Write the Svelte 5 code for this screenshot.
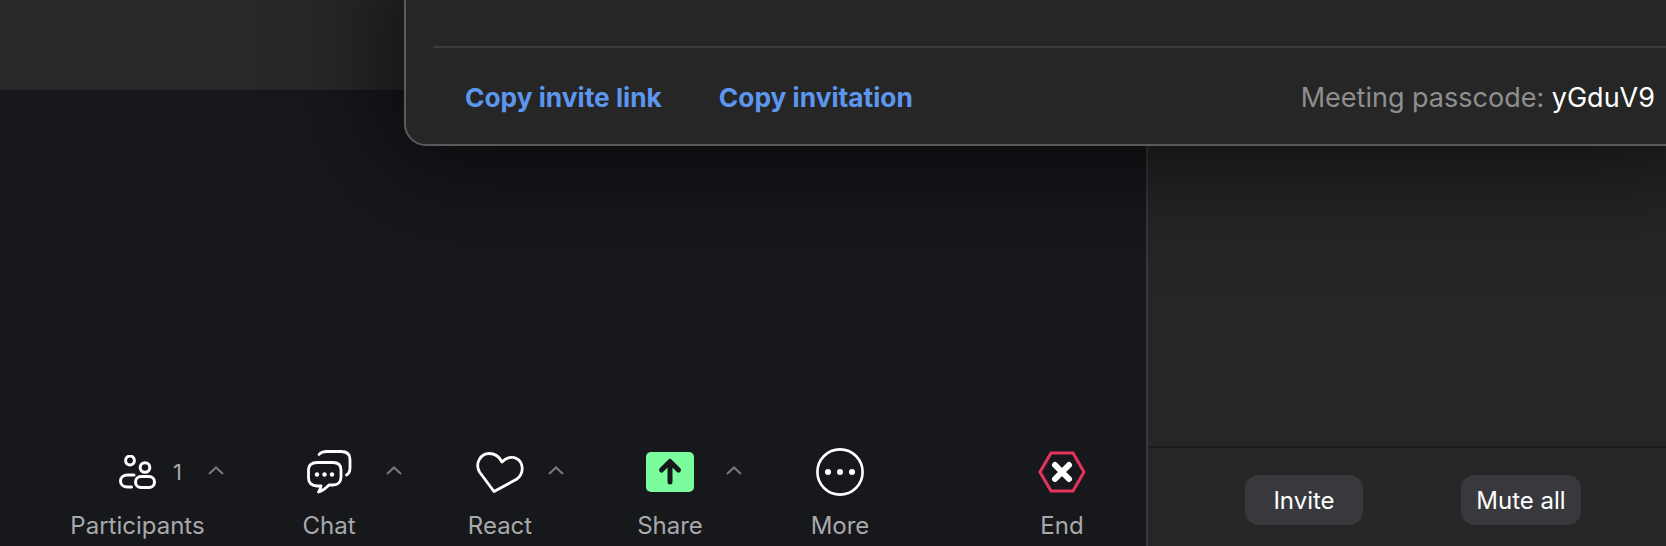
<script lang="ts">
  const tools = [
    { id: 'participants', label: 'Participants', count: '1', caret: true },
    { id: 'chat', label: 'Chat', caret: true },
    { id: 'react', label: 'React', caret: true },
    { id: 'share', label: 'Share', caret: true },
    { id: 'more', label: 'More', caret: false },
    { id: 'end', label: 'End', caret: false },
  ];
</script>

<div class="screen">
  <main class="stage">
    <div class="top-band"></div>
    <div class="toolbar">
      {#each tools as t (t.id)}
        <button class="tool {t.id}">
          <span class="icon-row">
            <span></span>
            {#if t.id === 'participants'}
              <svg width="37" height="34" viewBox="0 0 37 34" fill="none" stroke="#fff" stroke-width="3" stroke-linecap="round">
                <circle cx="11" cy="5.5" r="4.4" />
                <circle cx="26" cy="12.5" r="4.8" />
                <path d="M12.5 32H8.5C4.5 32 1.5 29.5 1.5 26C1.5 22.5 4.5 20 8.5 20H15" />
                <rect x="16.5" y="21.5" width="19" height="11" rx="5.5" />
              </svg>
            {:else if t.id === 'chat'}
              <svg width="45" height="44" viewBox="0 0 45 44" fill="none" stroke="#fff" stroke-width="2.8" stroke-linecap="round" stroke-linejoin="round">
                <path d="M12 4.5C14 2 16 1.5 20 1.5H34C39.5 1.5 43 4 43 9.5V18C43 21.5 42 23.5 39.5 25" />
                <path d="M10 12.5H26C31 12.5 34 15 34 20V27C34 32 31 35 26 35H22C19 38 16 41 11.5 42C13 40 14 38 14 36H10C5 36 1.5 33 1.5 28V20C1.5 15 5 12.5 10 12.5Z" />
                <g fill="#fff" stroke="none">
                  <circle cx="10" cy="24.5" r="2.2" />
                  <circle cx="17.5" cy="24.5" r="2.2" />
                  <circle cx="25" cy="24.5" r="2.2" />
                </g>
              </svg>
            {:else if t.id === 'react'}
              <svg width="48" height="41" viewBox="0 0 48 41" fill="none" stroke="#fff" stroke-width="2.8" stroke-linejoin="round">
                <path d="M18 39.5L3.5 20C-1.5 11 5 1.5 13 1.5C19 1.5 23.5 5 26 10C30 5.5 36 4 40.5 6.5C47.5 10 48.5 21 41 27Z" />
              </svg>
            {:else if t.id === 'share'}
              <svg width="48" height="40" viewBox="0 0 48 40">
                <rect width="48" height="40" rx="5" fill="#7bfd9d" />
                <path d="M24 30V10M15.5 18L24 9.5L32.5 18" fill="none" stroke="#17181c" stroke-width="5" stroke-linecap="round" stroke-linejoin="round" />
              </svg>
            {:else if t.id === 'more'}
              <svg width="48" height="48" viewBox="0 0 48 48" fill="none">
                <circle cx="24" cy="24" r="22.6" stroke="#fff" stroke-width="2.6" />
                <circle cx="12" cy="24" r="3" fill="#fff" />
                <circle cx="24" cy="24" r="3" fill="#fff" />
                <circle cx="36" cy="24" r="3" fill="#fff" />
              </svg>
            {:else}
              <svg width="48" height="42" viewBox="0 0 48 42" fill="none">
                <path d="M13 2H35L46 21L35 40H13L2 21Z" stroke="#e8325a" stroke-width="3" stroke-linejoin="miter" />
                <path d="M17 14L31 28M31 14L17 28" stroke="#fff" stroke-width="6" stroke-linecap="round" />
              </svg>
            {/if}
            <span class="extras">
              {#if t.count}<span class="count">{t.count}</span>{/if}
              {#if t.caret}
                <svg class="caret" width="16" height="9" viewBox="0 0 16 9" fill="none" stroke="#77787b" stroke-width="2.2"><path d="M1 8L8 1.5L15 8" /></svg>
              {/if}
            </span>
          </span>
          <span class="label">{t.label}</span>
        </button>
      {/each}
    </div>
  </main>

  <aside class="sidebar">
    <div class="list"></div>
    <div class="actions">
      <button class="action invite">Invite</button>
      <button class="action mute">Mute all</button>
    </div>
  </aside>

  <div class="dialog">
    <div class="footer">
      <button class="link">Copy invite link</button>
      <button class="link">Copy invitation</button>
      <span class="passcode">Meeting passcode: <span class="code">yGduV9</span></span>
    </div>
  </div>
</div>

<style>
  :global(body) {
    background: #17181c;
  }

  .screen {
    position: relative;
    display: flex;
    width: 1666px;
    height: 546px;
    overflow: hidden;
    background: #17181c;
    font-family: Inter, "Liberation Sans", sans-serif;
  }

  button {
    border: none;
    background: none;
    padding: 0;
    font-family: inherit;
    cursor: pointer;
  }

  .stage {
    flex: 1;
    display: flex;
    flex-direction: column;
    justify-content: space-between;
  }

  .top-band {
    height: 90px;
    background: #282828;
  }

  .toolbar {
    display: flex;
    padding-left: 42px;
    padding-bottom: 6px;
  }

  .tool {
    display: flex;
    flex-direction: column;
    align-items: stretch;
    gap: 16px;
  }

  .tool.participants { width: 191px; }
  .tool.chat { width: 192px; }
  .tool.react { width: 150px; }
  .tool.share { width: 190px; }
  .tool.more { width: 150px; }
  .tool.end { width: 100px; margin-left: 97px; }

  .icon-row {
    display: grid;
    grid-template-columns: 1fr auto 1fr;
    align-items: center;
    height: 48px;
  }

  .icon-row svg { display: block; }

  .extras {
    display: flex;
    align-items: center;
  }

  .caret { margin-top: -4px; }

  .participants .extras { padding-left: 17px; }
  .participants .caret { margin-left: 26px; }
  .chat .extras { padding-left: 34px; }
  .react .extras { padding-left: 24px; }
  .share .extras { padding-left: 32px; }

  .count {
    font-size: 22px;
    color: #a8a9ab;
    line-height: 1;
  }

  .label {
    font-size: 24px;
    line-height: 28px;
    color: #a8a9ab;
    text-align: center;
    white-space: nowrap;
  }

  .sidebar {
    width: 520px;
    flex-shrink: 0;
    display: flex;
    flex-direction: column;
    background: #262626;
    border-left: 2px solid #38383d;
    box-sizing: border-box;
  }

  .list { flex: 1; }

  .actions {
    height: 100px;
    box-sizing: border-box;
    border-top: 2px solid #1c1c1c;
    display: flex;
    align-items: center;
    gap: 98px;
    padding: 6px 0 0 97px;
  }

  .action {
    height: 50px;
    border-radius: 14px;
    background: #38393d;
    color: #fff;
    font-size: 24px;
  }

  .action.invite { width: 118px; }
  .action.mute { width: 120px; }

  .dialog {
    position: absolute;
    left: 404px;
    right: -20px;
    top: -19px;
    height: 165px;
    box-sizing: border-box;
    padding-left: 27px;
    display: flex;
    flex-direction: column;
    justify-content: flex-end;
    background: #262626;
    border: 2px solid #5a5a5a;
    border-radius: 0 0 0 22px;
    box-shadow: 0 0 110px 20px rgba(0, 0, 0, 0.62);
  }

  .footer {
    height: 98px;
    box-sizing: border-box;
    border-top: 2px solid #3c3c3c;
    display: flex;
    align-items: center;
    padding: 2px 29px 0 32px;
    gap: 57px;
  }

  .link {
    color: #5c96ee;
    font-size: 26.3px;
    font-weight: 700;
    white-space: nowrap;
  }

  .passcode {
    margin-left: auto;
    font-size: 27px;
    color: #8f8f8f;
    white-space: nowrap;
  }

  .code { color: #fff; }
</style>
